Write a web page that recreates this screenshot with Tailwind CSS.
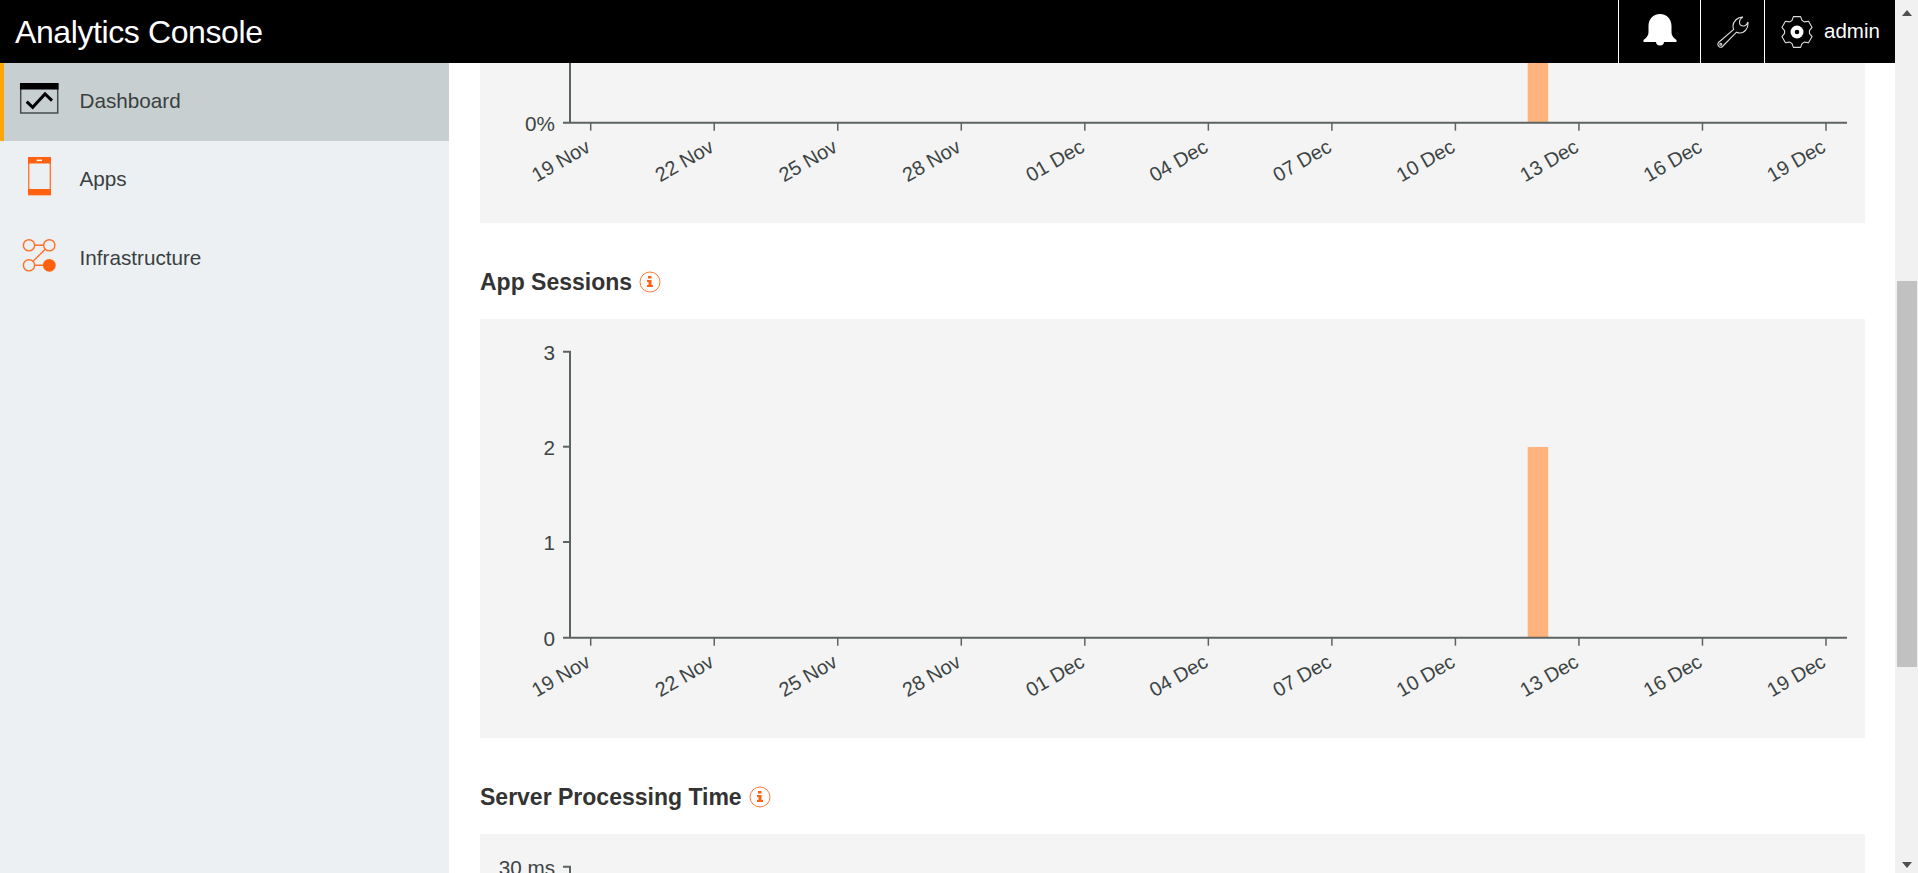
<!DOCTYPE html>
<html lang="en">
<head>
    <meta charset="UTF-8">
    <title>Analytics Console</title>
    <script src="https://cdn.jsdelivr.net/npm/@tailwindcss/browser@4"></script>
</head>
<body class="bg-white overflow-hidden font-['Liberation_Sans',Arial,sans-serif] text-[#333]">
<div class="flex h-[873px] w-[1918px] overflow-hidden">
    <div class="flex flex-col w-[1895px] h-full">

        <!-- Top bar -->
        <header class="flex items-stretch justify-between h-[63px] flex-none bg-black text-white">
            <div class="pl-[15px] flex items-center text-[32px] leading-none tracking-[-0.4px]">Analytics Console</div>
            <div class="flex items-stretch">
                <div class="w-[82px] border-l border-white flex items-center justify-center">
                    <svg width="34" height="32" viewBox="0 0 34 32" class="mt-[-3px] ml-[1px]"><path fill="#fff" d="M17 0C24 0 28.500 5 28.500 12V18C28.500 22 31 24 33.500 26V28H.5V26C3 24 5.500 22 5.500 18V12C5.500 5 10 0 17 0Z"/><circle cx="17" cy="27.500" r="4" fill="#fff"/></svg>
                </div>
                <div class="w-[64px] border-l border-white flex items-center justify-center">
                    <svg width="32" height="32" viewBox="0 0 32 32" fill="none" stroke="#ddd" stroke-width="1.1" class="mr-[-1px]"><path d="M26 1C20 1 16 6 16 10C16 11.500 16.300 12.500 16.700 13.300L1.500 26.500C-.5 29 3 33 5.500 30.500L19.500 16.200C20.500 16.700 21.500 17 23 17C27.500 17 31.500 12.500 31 6C30 8.500 28.500 10 26.500 10C24 10 22.500 8.500 22.500 6.500C22.500 4 24 2 26 1Z"/><circle cx="3.800" cy="28.200" r="1" /></svg>
                </div>
                <div class="w-[131px] border-l border-white flex items-center pl-[15px]">
                    <svg id="gear" width="34" height="34" viewBox="-17 -17 34 34" class="flex-none"></svg>
                    <span class="ml-[10px] text-[20.500px] leading-none">admin</span>
                </div>
            </div>
        </header>

        <div class="flex flex-1 min-h-0">
            <!-- Sidebar -->
            <nav class="w-[449px] flex-none bg-[#ecf0f3] text-[20.700px] text-[#3a3f40]">
                <a class="flex items-center h-[78px] border-l-4 border-[#ffa500] bg-[#c7cfd0]">
                    <svg width="76" height="78" class="flex-none">
                        <rect x="16.700" y="21" width="37" height="29" fill="none" stroke="#454c4c" stroke-width="1.500"/>
                        <rect x="16" y="20" width="38.500" height="6.500" fill="#000"/>
                        <path d="M22.700 38.700L28.700 44.300L41 31L48 37.700" fill="none" stroke="#000" stroke-width="3"/>
                    </svg>
                    <span class="pb-[3px] ml-[-0.5px]">Dashboard</span>
                </a>
                <a class="flex items-center h-[78px] pl-[4px]">
                    <svg width="76" height="78" class="flex-none">
                        <rect x="24.700" y="16.700" width="21.600" height="37" fill="none" stroke="#ff7a35" stroke-width="1.400"/>
                        <rect x="24" y="16" width="23" height="6.500" fill="#ff6110"/>
                        <rect x="24" y="48" width="23" height="6" fill="#ff6110"/>
                        <rect x="32.700" y="18.600" width="5.300" height="1.500" fill="#fff"/>
                    </svg>
                    <span class="pb-[2px] ml-[-0.5px]">Apps</span>
                </a>
                <a class="flex items-center h-[79px] pl-[4px]">
                    <svg width="76" height="79" class="flex-none">
                        <g fill="none" stroke="#ff6f26" stroke-width="1.400">
                            <circle cx="25" cy="26.300" r="5.600"/>
                            <circle cx="45.300" cy="26.300" r="5.600"/>
                            <circle cx="25" cy="46.300" r="5.600"/>
                            <path d="M30.600 26.300H39.700M41 30.500L29 42.300M30.600 46.300H40"/>
                        </g>
                        <circle cx="45.300" cy="46.300" r="6.400" fill="#ff6110"/>
                    </svg>
                    <span class="pb-[2px] ml-[-0.5px]">Infrastructure</span>
                </a>
            </nav>

            <!-- Main scrolled content -->
            <main class="flex-1 min-w-0 overflow-hidden pl-[31px] pr-[30px]">
                <div id="chart-top" class="bg-[#f4f4f4] h-[160px]"></div>

                <div class="flex items-center gap-[7px] pt-[46px] pb-[24px]">
                    <h2 class="h-[26px] leading-[26px] text-[23px] font-bold">App Sessions</h2>
                    <svg width="22" height="22" viewBox="0 0 22 22"><circle cx="11" cy="11" r="10" fill="none" stroke="#ff7a35" stroke-width="1"/><path fill="#ff6110" d="M9 5h3.500v2.500H9zM8 9h4.500v5H14v2H8v-2h1.500v-3H8z"/></svg>
                </div>
                <div id="chart-sessions" class="bg-[#f4f4f4] h-[419px]"></div>

                <div class="flex items-center gap-[7px] pt-[46px] pb-[24px]">
                    <h2 class="h-[26px] leading-[26px] text-[23px] font-bold">Server Processing Time</h2>
                    <svg width="22" height="22" viewBox="0 0 22 22"><circle cx="11" cy="11" r="10" fill="none" stroke="#ff7a35" stroke-width="1"/><path fill="#ff6110" d="M9 5h3.500v2.500H9zM8 9h4.500v5H14v2H8v-2h1.500v-3H8z"/></svg>
                </div>
                <div id="chart-time" class="bg-[#f4f4f4] h-[60px]"></div>
            </main>
        </div>
    </div>

    <!-- Scrollbar -->
    <div class="relative w-[23px] flex-none bg-[#f1f1f1] pt-[281px] pl-[2px]">
        <div class="absolute left-[7px] top-[10px] w-0 h-0 border-x-[5px] border-x-transparent border-b-[6px] border-b-[#505050]"></div>
        <div class="w-[20px] h-[386px] bg-[#c1c1c1]"></div>
        <div class="absolute left-[7px] top-[862px] w-0 h-0 border-x-[5px] border-x-transparent border-t-[6px] border-t-[#505050]"></div>
    </div>
</div>

<script>
    const dates = ["19 Nov","22 Nov","25 Nov","28 Nov","01 Dec","04 Dec","07 Dec","10 Dec","13 Dec","16 Dec","19 Dec"];
    const axisColor = "#5b6463";
    const textColor = "#3d4444";

    // x axis, y axis and the one bar, same scale on each chart
    function chart(id, height, y0, yTop, yLabels, barTop) {
        let svg = `<svg width="1385" height="${height}" font-size="20" fill="${textColor}" style="display:block">`;
        if (barTop !== null) {
            svg += `<rect x="1047.700" y="${barTop}" width="20.500" height="${y0 - barTop}" fill="#ffb47e"/>`;
        }
        svg += `<path d="M83 ${yTop}H90V${y0}H83M90 ${y0}H1367" fill="none" stroke="${axisColor}" stroke-width="2"/>`;
        yLabels.forEach(l => {
            svg += `<text x="75" y="${l.y + 8}" font-size="20.700" text-anchor="end">${l.text}</text>`;
            if (l.tick) svg += `<path d="M83 ${l.y}H90" stroke="${axisColor}" stroke-width="2"/>`;
        });
        dates.forEach((d, i) => {
            const x = 110.700 + i * 123.530;
            svg += `<path d="M${x} ${y0}V${y0 + 8}" stroke="${axisColor}" stroke-width="1.500"/>`;
            svg += `<text transform="translate(${x + 1} ${y0 + 28}) rotate(-30)" text-anchor="end">${d}</text>`;
        });
        document.getElementById(id).innerHTML = svg + "</svg>";
    }

    chart("chart-top", 160, 59.700, -5, [{ y: 59.700, text: "0%" }], -5);
    chart("chart-sessions", 419, 318.700, 32.700, [
        { y: 32.700, text: "3" },
        { y: 127.700, text: "2", tick: true },
        { y: 223, text: "1", tick: true },
        { y: 318.700, text: "0" }
    ], 128);
    document.getElementById("chart-time").innerHTML =
        `<svg width="1385" height="60" font-size="20.700" fill="${textColor}"><text x="75" y="40.700" text-anchor="end">30 ms</text><path d="M83 32.700H90V60" fill="none" stroke="${axisColor}" stroke-width="2"/></svg>`;

    // gear outline, six teeth
    let gear = "";
    for (let i = 0; i < 6; i++) {
        const a = (i * 60 - 90) * Math.PI / 180;
        const pt = (r, da) => `${(r * Math.cos(a + da)).toFixed(2)} ${(r * Math.sin(a + da)).toFixed(2)}`;
        gear += (i ? "L" : "M") + pt(12.500, -0.420) + "L" + pt(15.800, -0.230) + "L" + pt(15.800, 0.230) + "L" + pt(12.500, 0.420);
    }
    document.getElementById("gear").innerHTML =
        `<path d="${gear}Z" fill="none" stroke="#ddd" stroke-width="1.100" stroke-linejoin="round"/><circle r="6.500" fill="#fff"/><circle r="2.300" fill="#000"/>`;
</script>
</body>
</html>
